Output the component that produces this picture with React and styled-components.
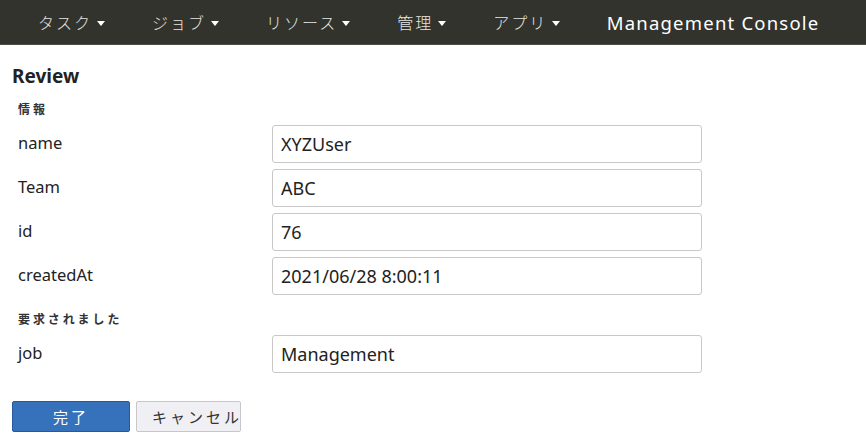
import React from 'react';
import styled, { createGlobalStyle } from 'styled-components';

const GlobalStyle = createGlobalStyle`
  html, body {
    margin: 0;
    padding: 0;
    background: #fff;
    font-family: "Noto Sans", "Noto Sans CJK JP", sans-serif;
    color: #222;
  }
`;

const menus = ['タスク', 'ジョブ', 'リソース', '管理', 'アプリ'];

const fields = [
  { label: 'name', value: 'XYZUser' },
  { label: 'Team', value: 'ABC' },
  { label: 'id', value: '76' },
  { label: 'createdAt', value: '2021/06/28 8:00:11' },
];

export default function App() {
  return (
    <>
      <GlobalStyle />
      <NavBar>
        {menus.map((m) => (
          <NavItem key={m}>
            {m}
            <Caret />
          </NavItem>
        ))}
        <Brand>Management Console</Brand>
      </NavBar>

      <Main>
        <Title>Review</Title>

        <SectionLabel>情報</SectionLabel>
        {fields.map((f) => (
          <Row key={f.label}>
            <Label>{f.label}</Label>
            <Field defaultValue={f.value} readOnly />
          </Row>
        ))}

        <SectionLabel $spaced>要求されました</SectionLabel>
        <Row>
          <Label>job</Label>
          <Field defaultValue="Management" readOnly />
        </Row>

        <Actions>
          <Button $primary>完了</Button>
          <Button>キャンセル</Button>
        </Actions>
      </Main>
    </>
  );
}

const NavBar = styled.nav`
  display: flex;
  align-items: center;
  height: 44px;
  padding-left: 14.5px;
  background: #33332d;
  border-bottom: 1px solid #4d4d47;
`;

const NavItem = styled.div`
  display: flex;
  align-items: center;
  gap: 5px;
  padding: 0 23.5px;
  color: #e4e4e0;
  font-family: "Noto Sans CJK JP", sans-serif;
  font-weight: 300;
  font-size: 16px;
  letter-spacing: 2px;
`;

const Caret = styled.span`
  width: 0;
  height: 0;
  border-left: 4px solid transparent;
  border-right: 4px solid transparent;
  border-top: 5px solid #fff;
  margin-top: 2px;
`;

const Brand = styled.div`
  padding: 0 23px;
  color: #fff;
  font-size: 18.5px;
  letter-spacing: 1.2px;
`;

const Main = styled.main`
  padding: 0 12px;
`;

const Title = styled.h1`
  margin: 18px 0 11px;
  font-size: 19px;
  line-height: 26px;
  font-weight: 700;
  color: #222;
`;

const SectionLabel = styled.div`
  padding-left: 6px;
  margin: ${(p) => (p.$spaced ? '15px 0 7px' : '0 0 7px')};
  font-family: "Noto Sans CJK JP", sans-serif;
  font-size: 12px;
  line-height: 18px;
  font-weight: 700;
  letter-spacing: 2.9px;
  color: #333;
`;

const Row = styled.div`
  display: grid;
  grid-template-columns: 260px 430px;
  margin-bottom: 6px;
`;

const Label = styled.div`
  padding: 6px 0 0 6px;
  font-size: 16.5px;
  line-height: 24px;
  color: #222;
`;

const Field = styled.input`
  box-sizing: border-box;
  height: 38px;
  padding: 0 8px;
  border: 1px solid #c8c8c8;
  border-radius: 3px;
  font-family: "Noto Sans", sans-serif;
  font-size: 18px;
  color: #222;
  outline: none;
`;

const Actions = styled.div`
  display: flex;
  gap: 6px;
  margin-top: 28px;
`;

const Button = styled.button`
  box-sizing: border-box;
  height: 31px;
  width: ${(p) => (p.$primary ? '118px' : '105px')};
  padding: ${(p) => (p.$primary ? '0' : '0 0 0 15px')};
  text-align: ${(p) => (p.$primary ? 'center' : 'left')};
  white-space: nowrap;
  overflow: hidden;
  border-radius: 2px;
  border: 1px solid ${(p) => (p.$primary ? '#285a9a' : '#c6c6cc')};
  background: ${(p) => (p.$primary ? '#3572bb' : '#f0f0f4')};
  color: ${(p) => (p.$primary ? '#fff' : '#333')};
  font-family: "Noto Sans CJK JP", sans-serif;
  font-size: 15px;
  letter-spacing: 3px;
  cursor: pointer;
`;
